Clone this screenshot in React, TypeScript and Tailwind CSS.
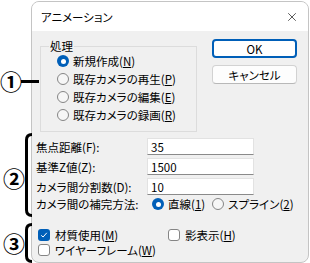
import { X } from "lucide-react";

function Radio({ checked }: { checked?: boolean }) {
  return checked ? (
    <span className="flex h-[12px] w-[12px] shrink-0 items-center justify-center rounded-full bg-[#005fb8]">
      <span className="h-[5px] w-[5px] rounded-full bg-white" />
    </span>
  ) : (
    <span className="block h-[12px] w-[12px] shrink-0 rounded-full border border-[#858585] bg-[#f6f6f6]" />
  );
}

function Check({ checked }: { checked?: boolean }) {
  return checked ? (
    <span className="flex h-[12px] w-[12px] shrink-0 items-center justify-center rounded-[3px] bg-[#005fb8]">
      <svg width="8" height="8" viewBox="0 0 8 8" fill="none">
        <path d="M1.2 4.3 L3.1 6 L6.8 1.8" stroke="white" strokeWidth="1" />
      </svg>
    </span>
  ) : (
    <span className="block h-[12px] w-[12px] shrink-0 rounded-[3px] border border-[#858585] bg-white" />
  );
}

function Bracket({ className, height }: { className: string; height: number }) {
  return (
    <svg className={className} width="9" height={height} viewBox={`0 0 9 ${height}`} fill="none">
      <path
        d={`M8 1.5 Q2.5 1.5 2.5 7 L2.5 ${height - 7} Q2.5 ${height - 1.5} 8 ${height - 1.5}`}
        stroke="black"
        strokeWidth="3"
      />
    </svg>
  );
}

const radios = [
  { label: "新規作成", key: "N", checked: true },
  { label: "既存カメラの再生", key: "P" },
  { label: "既存カメラの編集", key: "E" },
  { label: "既存カメラの録画", key: "R" },
];

const fields = [
  { label: "焦点距離", key: "F", value: "35" },
  { label: "基準Z値", key: "Z", value: "1500" },
  { label: "カメラ間分割数", key: "D", value: "10" },
];

export default function App() {
  return (
    <div className="relative h-[263px] w-[310px] overflow-hidden bg-white font-['Noto_Sans_CJK_JP',sans-serif] text-[11.5px] text-black [font-feature-settings:'palt']">
      <div className="ml-[31px] mt-[1px] flex h-[262px] w-[278px] flex-col overflow-hidden rounded-[8px] border border-[#c4c4c4] bg-[#f0f0f0]">
        {/* タイトルバー */}
        <div className="flex h-[29px] shrink-0 items-center justify-between bg-white pl-[9px] pr-[9px]">
          <span className="leading-[14px]">アニメーション</span>
          <X size={14} strokeWidth={1.1} />
        </div>

        <div className="flex pl-[8px] pt-[8px]">
          <div className="relative mt-[7px] h-[86px] w-[157px] border border-[#dcdcdc] pl-[16px] pt-[5px]">
            <span className="absolute left-[8px] top-[-8px] bg-[#f0f0f0] px-[1px] leading-[14px]">処理</span>
            {radios.map((r) => (
              <div key={r.key} className="flex h-[18px] items-center gap-[4px]">
                <Radio checked={r.checked} />
                <span className="leading-[14px]">
                  {r.label}(<u className="underline-offset-1">{r.key}</u>)
                </span>
              </div>
            ))}
          </div>

          <div className="ml-[15px] flex flex-col gap-[7px]">
            <button className="flex h-[19px] w-[85px] items-center justify-center rounded-[4px] border-2 border-[#005fb8] bg-white leading-[14px]">
              OK
            </button>
            <button className="flex h-[19px] w-[85px] items-center justify-center rounded-[4px] border border-[#d2d2d2] border-b-[#b8b8b8] bg-[#fdfdfd] leading-[14px]">
              キャンセル
            </button>
          </div>
        </div>

        <div className="mt-[6px] grid grid-cols-[111px_107px] gap-y-[3px] pl-[4px]">
          {fields.map((f) => (
            <div key={f.key} className="contents">
              <span className="flex h-[17px] items-center leading-[14px]">
                {f.label}({f.key}):
              </span>
              <div className="flex h-[17px] items-center border border-[#e2e2e2] border-b-[#8a8a8a] bg-white px-[3px] leading-[14px]">
                {f.value}
              </div>
            </div>
          ))}
        </div>

        <div className="flex h-[18px] items-center pl-[4px]">
          <span className="w-[116px] shrink-0 leading-[14px]">カメラ間の補完方法:</span>
          <Radio checked />
          <span className="ml-[4px] leading-[14px]">
            直線(<u className="underline-offset-1">1</u>)
          </span>
          <span className="ml-[7px] flex">
            <Radio />
          </span>
          <span className="ml-[4px] leading-[14px]">
            スプライン(<u className="underline-offset-1">2</u>)
          </span>
        </div>

        <div className="mt-[14px] grid grid-cols-[130px_auto] pl-[6px]">
          <div className="flex h-[15px] items-center gap-[5px]">
            <Check checked />
            <span className="leading-[12px]">
              材質使用(<u className="underline-offset-1">M</u>)
            </span>
          </div>
          <div className="flex h-[15px] items-center gap-[5px]">
            <Check />
            <span className="leading-[12px]">
              影表示(<u className="underline-offset-1">H</u>)
            </span>
          </div>
          <div className="flex h-[15px] items-center gap-[5px]">
            <Check />
            <span className="leading-[12px]">
              ワイヤーフレーム(<u className="underline-offset-1">W</u>)
            </span>
          </div>
        </div>
      </div>

      {/* 注釈 */}
      <span className="absolute left-[0px] top-[69px] text-[22px] font-bold leading-[22px]">①</span>
      <span className="absolute left-[21px] top-[80px] h-[3px] w-[18px] bg-black" />
      <Bracket className="absolute left-[24px] top-[133px]" height={84} />
      <span className="absolute left-[3px] top-[166px] text-[22px] font-bold leading-[22px]">②</span>
      <Bracket className="absolute left-[24px] top-[223px]" height={40} />
      <span className="absolute left-[3px] top-[231px] text-[22px] font-bold leading-[22px]">③</span>
    </div>
  );
}
